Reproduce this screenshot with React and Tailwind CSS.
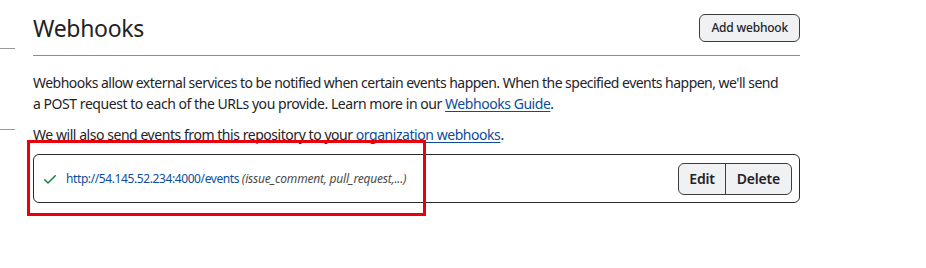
import React from "react";

const Check = () => (
  <svg width="16" height="16" viewBox="0 0 16 16" className="text-[#1a7f37]" fill="currentColor">
    <path d="M13.78 4.22a.75.75 0 0 1 0 1.06l-7.25 7.25a.75.75 0 0 1-1.06 0L2.22 9.28a.751.751 0 0 1 .018-1.042.751.751 0 0 1 1.042-.018L6 10.94l6.72-6.72a.75.75 0 0 1 1.06 0Z" />
  </svg>
);

const App = () => {
  return (
    <div
      className="relative flex h-[268px] w-[926px] bg-white text-[#1f2328]"
      style={{ fontFamily: '"Noto Sans", "Open Sans", sans-serif' }}
    >
      {/* Sidebar edge */}
      <div className="w-[15px] shrink-0">
        <div className="mt-[48px] h-[82px] border-y border-[#9a9a9a]" />
      </div>

      {/* Main */}
      <div className="ml-[18px] w-[767px]">
        <div className="flex items-center justify-between border-b border-[#8c8c8c] pt-[13px] pb-[12px]">
          <h2 className="text-[23px] leading-[30px] font-normal tracking-[-0.3px]">Webhooks</h2>
          <button className="h-[28px] rounded-[6px] border border-[#3d3d3d] bg-[#eff1f3] px-[11px] text-[12px] font-medium tracking-[-0.2px]">
            Add webhook
          </button>
        </div>

        <p className="mt-[16px] whitespace-nowrap text-[14px] leading-[21px] tracking-[-0.45px]">
          <span className="tracking-[-0.52px]">
            Webhooks allow external services to be notified when certain events happen. When the specified events happen, we'll send
          </span>
          <br />
          a POST request to each of the URLs you provide. Learn more in our{" "}
          <a className="text-[#0b4d9a] underline underline-offset-2">Webhooks Guide</a>.
        </p>
        <p className="mt-[10px] text-[14px] leading-[21px] tracking-[-0.45px]">
          We will also send events from this repository to your{" "}
          <a className="text-[#0b4d9a] underline underline-offset-2">organization webhooks</a>.
        </p>

        <div className="mt-[9px] flex h-[49px] items-center justify-between rounded-[6px] border border-[#2b2b2b] pl-[8px] pr-[7px]">
          <div className="flex items-center gap-[8px] text-[12px] tracking-[-0.4px]">
            <Check />
            <div>
              <a className="text-[#0b4d9a]">http://54.145.52.234:4000/events</a>{" "}
              <span className="italic tracking-[-0.2px] text-[#4a4a4a]">(issue_comment, pull_request,...)</span>
            </div>
          </div>
          <div className="flex h-[32px] overflow-hidden rounded-[6px] border border-[#3d3d3d] bg-[#eff1f3] text-[14px] font-semibold tracking-[-0.2px]">
            <button className="px-[10px]">Edit</button>
            <button className="border-l border-[#3d3d3d] px-[11px]">Delete</button>
          </div>
        </div>
      </div>

      {/* Annotation */}
      <div className="absolute left-[27px] top-[140px] h-[76px] w-[399px] border-[3px] border-[#e8000b]" />
    </div>
  );
};

export default App;
